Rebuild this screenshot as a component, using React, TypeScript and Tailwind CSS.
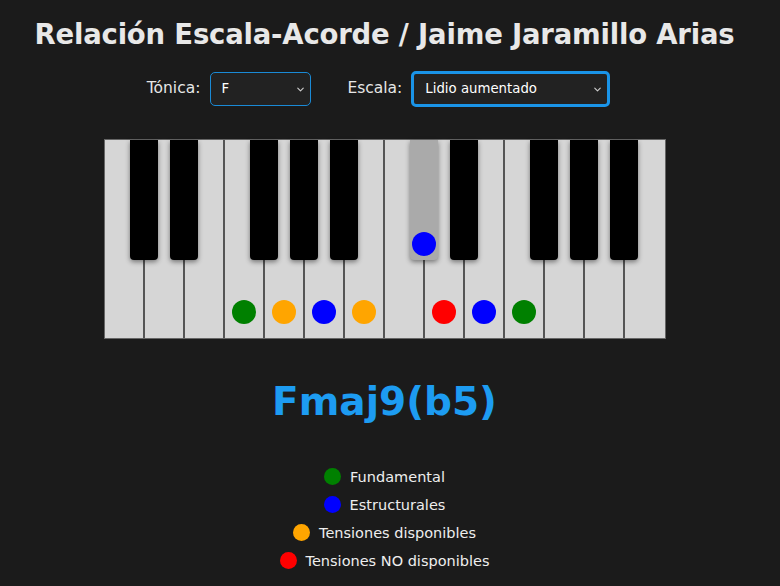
import React, { useState } from 'react';
import { ChevronDown } from 'lucide-react';

type Role = 'root' | 'struct' | 'avail' | 'avoid';

const DOT: Record<Role, string> = {
  root: 'bg-[#008000]',
  struct: 'bg-[#0000ff]',
  avail: 'bg-[#ffa500]',
  avoid: 'bg-[#ff0000]',
};

// two octaves starting on C
const WHITE: (Role | null)[] = [null, null, null, 'root', 'avail', 'struct', 'avail', null, 'avoid', 'struct', 'root', null, null, null];
// black key after white key index
const BLACK: { after: number; role: Role | null; active?: boolean }[] = [
  { after: 0, role: null },
  { after: 1, role: null },
  { after: 3, role: null },
  { after: 4, role: null },
  { after: 5, role: null },
  { after: 7, role: 'struct', active: true },
  { after: 8, role: null },
  { after: 10, role: null },
  { after: 11, role: null },
  { after: 12, role: null },
];

const LEGEND: { role: Role; label: string }[] = [
  { role: 'root', label: 'Fundamental' },
  { role: 'struct', label: 'Estructurales' },
  { role: 'avail', label: 'Tensiones disponibles' },
  { role: 'avoid', label: 'Tensiones NO disponibles' },
];

const font = { fontFamily: '"DejaVu Sans", "Noto Sans", sans-serif' };

export default function App() {
  const [tonic, setTonic] = useState('F');
  const [scale, setScale] = useState('Lidio aumentado');

  return (
    <div className="min-h-[586px] w-full bg-[#1b1b1b] flex flex-col items-center pr-[11px] text-[#e6e6e6]" style={font}>
      <h1 className="mt-[17px] text-[27.5px] leading-[34px] font-bold tracking-[-0.2px] text-[#e8e8e8] whitespace-nowrap">
        Relación Escala-Acorde / Jaime Jaramillo Arias
      </h1>

      {/* Selectors */}
      <div className="mt-[20px] flex items-center mr-[12px]">
        <label className="text-[15.5px] text-[#e6e6e6] mr-[10px]">Tónica:</label>
        <div className="relative">
          <select
            value={tonic}
            onChange={e => setTonic(e.target.value)}
            className="appearance-none w-[101px] h-[34px] bg-[#222222] text-white text-[13.3px] pl-[10px] rounded-[5px] border border-[#1a8ad6] outline-none"
          >
            {['C', 'C#', 'D', 'Eb', 'E', 'F', 'F#', 'G', 'Ab', 'A', 'Bb', 'B'].map(n => (
              <option key={n}>{n}</option>
            ))}
          </select>
          <ChevronDown className="absolute right-[5px] top-[12px] w-[11px] h-[11px] text-[#cccccc] pointer-events-none" strokeWidth={2.5} />
        </div>

        <label className="text-[15.5px] text-[#e6e6e6] ml-[36px] mr-[9px]">Escala:</label>
        <div className="relative">
          <select
            value={scale}
            onChange={e => setScale(e.target.value)}
            className="appearance-none w-[199px] h-[36px] bg-[#222222] text-white text-[13.3px] pl-[11px] rounded-[5px] border-[3px] border-[#1a94e8] outline-none"
          >
            {['Lidio aumentado', 'Jónico', 'Dórico', 'Frigio', 'Lidio', 'Mixolidio', 'Eólico', 'Locrio'].map(n => (
              <option key={n}>{n}</option>
            ))}
          </select>
          <ChevronDown className="absolute right-[7px] top-[13px] w-[11px] h-[11px] text-[#cccccc] pointer-events-none" strokeWidth={2.5} />
        </div>
      </div>

      {/* Keyboard */}
      <div className="mt-[32px] relative flex border border-[#666666] bg-[#d6d6d6]">
        {WHITE.map((role, i) => (
          <div
            key={i}
            className={`w-[40px] h-[198px] bg-[#d6d6d6] flex flex-col justify-end items-center pb-[14px] ${i < WHITE.length - 1 ? 'border-r-2 border-[#555555]' : ''}`}
          >
            {role && <div className={`w-[24px] h-[24px] rounded-full ${DOT[role]}`} />}
          </div>
        ))}
        {BLACK.map(b => (
          <div
            key={b.after}
            className={`absolute top-0 w-[28px] h-[120px] rounded-b-[4px] shadow-[0_2px_5px_rgba(0,0,0,0.45)] flex flex-col justify-end items-center pb-[4px] ${b.active ? 'bg-[#aaaaaa]' : 'bg-black'}`}
            style={{ left: (b.after + 1) * 40 - 15 }}
          >
            {b.role && <div className={`w-[24px] h-[24px] rounded-full ${DOT[b.role]}`} />}
          </div>
        ))}
      </div>

      {/* Chord name */}
      <div className="mt-[38px] text-[39px] leading-[50px] font-bold text-[#1d9cf2]">Fmaj9(b5)</div>

      {/* Legend */}
      <div className="mt-[41px] flex flex-col items-center gap-[8px]">
        {LEGEND.map(l => (
          <div key={l.role} className="flex items-center h-[20px]">
            <span className={`w-[17px] h-[17px] rounded-full mr-[9px] mt-[-4px] ${DOT[l.role]}`} />
            <span className="text-[14.5px] text-[#eeeeee]">{l.label}</span>
          </div>
        ))}
      </div>
    </div>
  );
}
